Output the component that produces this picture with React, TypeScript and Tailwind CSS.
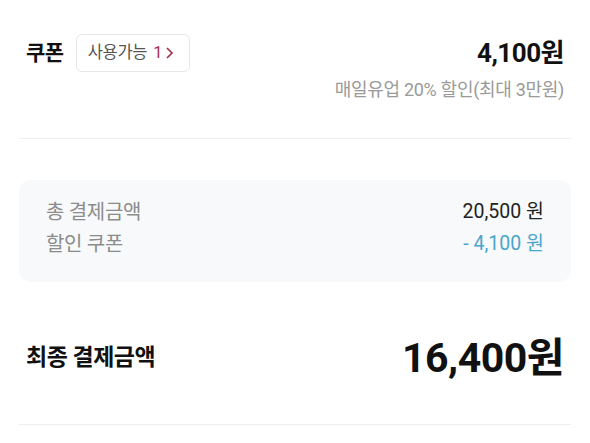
import React from "react";

export default function App() {
  const font = { fontFamily: "Roboto, 'Noto Sans CJK KR', sans-serif" };
  return (
    <div className="w-[590px] h-[443px] bg-white overflow-hidden" style={font}>
      <div className="px-[19px]">
        {/* Coupon section */}
        <div className="px-[7px] pt-[34px] pb-[36px]">
          <div className="flex items-center justify-between h-[38px]">
            <div className="flex items-center">
              <span className="text-[21px] font-bold text-[#111] leading-none tracking-[-0.5px]">쿠폰</span>
              <div className="ml-[12px] h-[38px] w-[114px] rounded-[6px] border border-[#e6e6e6] flex items-center pl-[11px]">
                <span className="text-[16.5px] text-[#555] leading-none tracking-[-0.3px]">사용가능</span>
                <span className="ml-[6px] text-[16.5px] text-[#a8304b] leading-none">1</span>
                <svg width="9" height="14" viewBox="0 0 9 14" className="ml-[3px]">
                  <path d="M2 2 L7 7 L2 12" fill="none" stroke="#a8304b" strokeWidth="1.7" />
                </svg>
              </div>
            </div>
            <span className="text-[26px] font-bold text-[#111] leading-none tracking-[-0.5px]">4,100원</span>
          </div>
          <div className="mt-[6px] text-right text-[18px] text-[#9a9a9a] leading-[24px] tracking-[-0.3px]">
            매일유업 20% 할인(최대 3만원)
          </div>
        </div>
        <div className="h-px bg-[#eeeeee]" />

        {/* Summary box */}
        <div className="mt-[41px] h-[102px] rounded-[12px] bg-[#f7f9fa] px-[27px] pt-[19px] flex flex-col gap-[6px]">
          <div className="flex justify-between items-center h-[26px]">
            <span className="text-[20px] text-[#8c8c8c] tracking-[-0.3px]">총 결제금액</span>
            <span className="text-[19.5px] text-[#222]">20,500 원</span>
          </div>
          <div className="flex justify-between items-center h-[26px]">
            <span className="text-[20px] text-[#8c8c8c] tracking-[-0.3px]">할인 쿠폰</span>
            <span className="text-[19.5px] text-[#4aa5cb]">- 4,100 원</span>
          </div>
        </div>

        {/* Final */}
        <div className="px-[7px] mt-[56px] flex justify-between items-center h-[40px]">
          <span className="text-[23px] font-bold text-[#111] tracking-[-0.5px]">최종 결제금액</span>
          <span className="text-[41px] font-bold text-[#111] leading-none tracking-[-0.5px]">16,400원</span>
        </div>
        <div className="mt-[46px] h-px bg-[#eeeeee]" />
      </div>
    </div>
  );
}
